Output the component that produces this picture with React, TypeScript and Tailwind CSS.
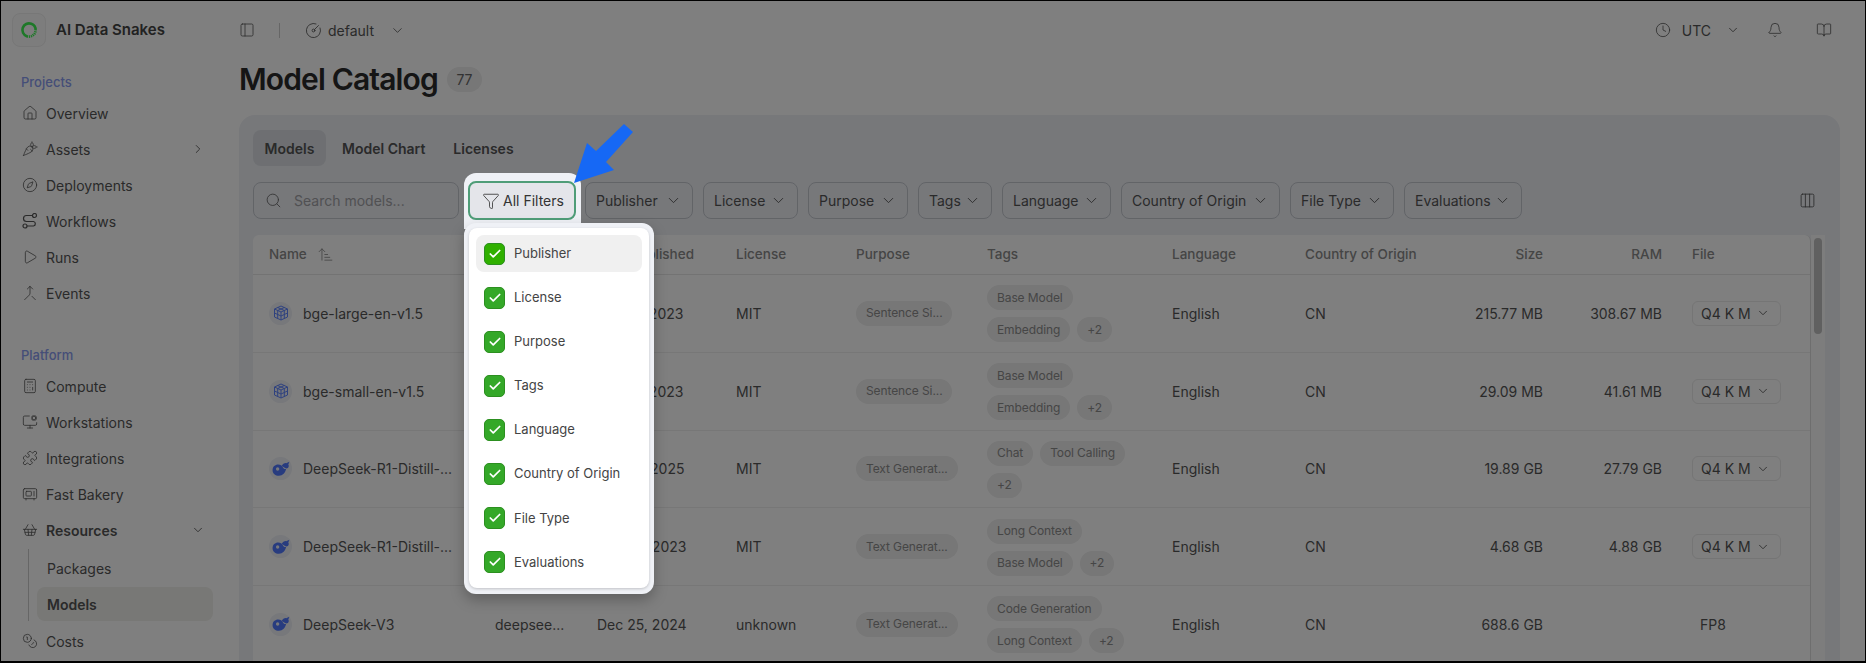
import {
  ArrowUpNarrowWide,
  Bell,
  BookOpen,
  Calculator,
  Carrot,
  Check,
  ChevronDown,
  ChevronRight,
  CircleGauge,
  Clock,
  Coins,
  Columns3,
  Compass,
  Funnel,
  House,
  Merge,
  Microwave,
  MonitorCog,
  PanelLeft,
  Play,
  Puzzle,
  Search,
  ShoppingBasket,
} from "lucide-react";
import type { ComponentType, ReactNode } from "react";

type IconType = ComponentType<{ size?: number; strokeWidth?: number; className?: string }>;

const gridCols =
  "grid grid-cols-[226px_102px_139px_120px_131px_185px_133px_125px_133px_119px_1fr] pl-[6px]";

function WorkflowIcon() {
  return (
    <svg width="16" height="16" viewBox="0 0 16 16" fill="none" stroke="currentColor" strokeWidth="1.2" className="shrink-0">
      <circle cx="12.500" cy="2.500" r="2" />
      <circle cx="3" cy="13" r="2" />
      <path d="M10.500 2.500H4.500a3 3 0 0 0 0 6h7a2.300 2.300 0 0 1 0 4.500H5" />
    </svg>
  );
}

function NavRow({ icon: Icon, label, bold, right }: { icon?: IconType; label: string; bold?: boolean; right?: ReactNode }) {
  return (
    <div className="flex h-9 items-center gap-2 pl-[21px] pr-[34px] text-[14px] text-[#555]">
      {Icon ? <Icon size={16} strokeWidth={1.2} className="shrink-0" /> : <WorkflowIcon />}
      <span className={bold ? "font-semibold" : ""}>{label}</span>
      {right && <span className="ml-auto">{right}</span>}
    </div>
  );
}

function Sidebar() {
  return (
    <aside className="flex w-[238px] shrink-0 flex-col">
      <div className="ml-[11px] mt-3 flex items-center gap-[10px]">
        <div className="flex h-[34px] w-[34px] items-center justify-center rounded-lg border border-[#eee] bg-[#fafafa]">
          <svg width="20" height="20" viewBox="0 0 20 20" fill="none">
            <circle cx="10" cy="10" r="6.600" stroke="#3cf050" strokeWidth="2.600" strokeDasharray="29 0.800 1.200 0.800 1.200 0.800 1.200 0.800 1.200 0.800 1.200 0.800" transform="rotate(110 10 10)" />
          </svg>
        </div>
        <span className="text-[15px] font-semibold text-[#444]">AI Data Snakes</span>
      </div>
      <div className="ml-5 mt-[25px] h-5 text-[13px] font-medium leading-5 text-[#8a9cf0]">Projects</div>
      <nav className="mt-[3px]">
        <NavRow icon={House} label="Overview" />
        <NavRow icon={Carrot} label="Assets" right={<ChevronRight size={14} strokeWidth={1.5} />} />
        <NavRow icon={Compass} label="Deployments" />
        <NavRow label="Workflows" />
        <NavRow icon={Play} label="Runs" />
        <NavRow icon={Merge} label="Events" />
      </nav>
      <div className="ml-5 mt-[34px] h-5 text-[13px] font-medium leading-5 text-[#8a9cf0]">Platform</div>
      <nav className="mt-[3px]">
        <NavRow icon={Calculator} label="Compute" />
        <NavRow icon={MonitorCog} label="Workstations" />
        <NavRow icon={Puzzle} label="Integrations" />
        <NavRow icon={Microwave} label="Fast Bakery" />
        <NavRow icon={ShoppingBasket} label="Resources" bold right={<ChevronDown size={14} strokeWidth={1.5} />} />
        <div className="ml-[27px] mt-[1px] border-l border-[#ccc] pl-[8px] text-[14px] text-[#555]">
          <div className="flex h-[38px] items-center pl-[10px]">Packages</div>
          <div className="flex h-[34px] w-[176px] items-center rounded-lg bg-[#f0f0ec] pl-[10px] font-semibold">Models</div>
        </div>
        <div className="mt-[2px]">
          <NavRow icon={Coins} label="Costs" />
        </div>
      </nav>
    </aside>
  );
}

function FilterButton({ label, className }: { label: string; className: string }) {
  return (
    <button className={`flex h-[37px] items-center justify-between rounded-lg border border-[#c4c8cf] pl-[10px] pr-[10px] text-[14px] text-[#555] ${className}`}>
      {label}
      <ChevronDown size={17} strokeWidth={1.3} />
    </button>
  );
}

function CheckRow({ label, active }: { label: string; active?: boolean }) {
  return (
    <div className={`flex h-[37px] items-center gap-2 rounded-lg pl-2 text-[13px] text-[#444] ${active ? "bg-[#f0f0f0]" : ""}`}>
      <span className={`flex h-[22px] w-[21px] items-center justify-center rounded-[5px] border border-[#2c8f20] ${active ? "bg-[#30b000]" : "bg-[#34a828]"}`}>
        <Check size={14} strokeWidth={3} className="text-white" />
      </span>
      <span className="ml-[1px]">{label}</span>
    </div>
  );
}

function AllFilters() {
  return (
    <div className="relative z-20 h-[37px] w-[106px] shrink-0">
      <div className="absolute -left-[5px] -top-[9px] h-[56px] w-[117px] rounded-t-xl bg-[#eff1f6]" />
      <button className="relative -left-px -top-px flex h-[39px] w-[108px] items-center gap-[3px] rounded-lg border-2 border-[#4f9d78] bg-[#e4e5ea] pl-3 text-[14px] text-[#333]">
        <Funnel size={18} strokeWidth={1.1} className="shrink-0" />
        All Filters
      </button>
      <div className="absolute -left-[5px] top-[41px] h-[371px] w-[190px] rounded-xl bg-[#eff1f6] p-[5px] shadow-[0_6px_14px_rgba(0,0,0,0.25)]">
        <div className="flex h-[360px] w-[180px] flex-col gap-[7.150px] rounded-lg bg-white px-[7px] py-[7px] shadow-[0_1px_3px_rgba(0,0,0,0.2)]">
          <CheckRow label="Publisher" active />
          <CheckRow label="License" />
          <CheckRow label="Purpose" />
          <CheckRow label="Tags" />
          <CheckRow label="Language" />
          <CheckRow label="Country of Origin" />
          <CheckRow label="File Type" />
          <CheckRow label="Evaluations" />
        </div>
      </div>
    </div>
  );
}

function CubeIcon() {
  return (
    <svg width="16" height="16" viewBox="0 0 16 16" fill="none" stroke="#5e84ff" strokeWidth="1">
      <path d="M8 1 14.500 4v8L8 15 1.500 12V4z" />
      <path d="M1.500 4 8 7l6.500-3M8 7v8" />
      <path d="M4.700 2.500 11.300 5.500M11.300 2.500 4.700 5.500M1.500 8 8 11l6.500-3M4.700 5.500v8M11.300 5.500v8" />
    </svg>
  );
}

function WhaleIcon() {
  return (
    <svg width="18" height="16" viewBox="0 0 16 14" fill="#5078ff">
      <path d="M.5 8C.5 5 2.700 3 5.500 3 7.500 3 9 4.200 9.800 5.600c.7 1.200 1.500 1.700 2.700 1.400-.5 3.300-3 6-6.300 6C3 13 .5 11 .5 8z" />
      <path d="M8.600 4.300C9.500 2.600 11 1.600 12.600 1.800L15.500.5l-1 2.500c.7 1.100.5 2.300-.4 3.100-1.200.8-2.600.4-3.500-.6z" />
      <circle cx="5" cy="7" r="1.500" fill="#eef0f6" />
    </svg>
  );
}

function Badge({ children }: { children: ReactNode }) {
  return (
    <span className="inline-flex h-[25px] items-center whitespace-nowrap rounded-full bg-[#eeeeee] px-[10px] text-[12px] tracking-[-0.1px] text-[#8c8c8c]">
      {children}
    </span>
  );
}

type Row = {
  kind: "cube" | "whale";
  name: string;
  publisher: string;
  published: string;
  license: string;
  purpose: string;
  tags: string[];
  size: string;
  ram: string;
  file: string;
};

// publisher stays empty where the open menu covers the cell
const rows: Row[] = [
  { kind: "cube", name: "bge-large-en-v1.5", publisher: "", published: "Sep 12, 2023", license: "MIT", purpose: "Sentence Si...", tags: ["Base Model", "Embedding", "+2"], size: "215.77 MB", ram: "308.67 MB", file: "Q4 K M" },
  { kind: "cube", name: "bge-small-en-v1.5", publisher: "", published: "Sep 12, 2023", license: "MIT", purpose: "Sentence Si...", tags: ["Base Model", "Embedding", "+2"], size: "29.09 MB", ram: "41.61 MB", file: "Q4 K M" },
  { kind: "whale", name: "DeepSeek-R1-Distill-...", publisher: "", published: "Jan 20, 2025", license: "MIT", purpose: "Text Generat...", tags: ["Chat", "Tool Calling", "+2"], size: "19.89 GB", ram: "27.79 GB", file: "Q4 K M" },
  { kind: "whale", name: "DeepSeek-R1-Distill-...", publisher: "", published: "Dec 25, 2023", license: "MIT", purpose: "Text Generat...", tags: ["Long Context", "Base Model", "+2"], size: "4.68 GB", ram: "4.88 GB", file: "Q4 K M" },
  { kind: "whale", name: "DeepSeek-V3", publisher: "deepsee...", published: "Dec 25, 2024", license: "unknown", purpose: "Text Generat...", tags: ["Code Generation", "Long Context", "+2"], size: "688.6 GB", ram: "", file: "FP8" },
];

function ModelRow({ row }: { row: Row }) {
  return (
    <div className={`${gridCols} h-[77.750px] shrink-0 items-center border-b border-[#eee] text-[14px] text-[#555]`}>
      <div className="flex items-center gap-[11px] px-[10px]">
        <span className="flex h-[23px] w-[23px] shrink-0 items-center justify-center rounded-full bg-[#eef0f6]">
          {row.kind === "cube" ? <CubeIcon /> : <WhaleIcon />}
        </span>
        <span className="whitespace-nowrap">{row.name}</span>
      </div>
      <div className="px-[10px]">{row.publisher}</div>
      <div className="px-[10px]">{row.published}</div>
      <div className="px-[10px]">{row.license}</div>
      <div className="px-[10px]">
        <Badge>{row.purpose}</Badge>
      </div>
      <div className="flex max-w-[160px] flex-wrap gap-[7px] px-[10px] pt-px">
        {row.tags.map((t) => (
          <Badge key={t}>{t}</Badge>
        ))}
      </div>
      <div className="px-[10px]">English</div>
      <div className="px-[10px]">CN</div>
      <div className="px-[10px] text-right">{row.size}</div>
      <div className="px-[10px] text-right">{row.ram}</div>
      <div className="pl-5">
        {row.file === "FP8" ? (
          <span className="pl-2">{row.file}</span>
        ) : (
          <span className="flex h-[25px] w-[89px] items-center justify-between rounded-md border border-[#eaeaea] pl-2 pr-[10px]">
            {row.file}
            <ChevronDown size={14} strokeWidth={1.5} />
          </span>
        )}
      </div>
    </div>
  );
}

function ModelTable() {
  return (
    <div className="flex min-h-0 flex-1">
      <div className="flex min-w-0 flex-1 flex-col overflow-hidden rounded-t-md border-r border-[#ddd] bg-white">
        <div className={`${gridCols} h-10 shrink-0 items-center whitespace-nowrap border-b border-[#e6e6e6] text-[13.500px] font-medium text-[#8a8a8a]`}>
          <div className="flex items-center gap-[10px] px-[10px]">
            Name
            <ArrowUpNarrowWide size={17} strokeWidth={1.2} />
          </div>
          <div className="px-[10px]" />
          <div className="px-[10px]">Date Published</div>
          <div className="px-[10px]">License</div>
          <div className="px-[10px]">Purpose</div>
          <div className="px-[10px]">Tags</div>
          <div className="px-[10px]">Language</div>
          <div className="px-[10px]">Country of Origin</div>
          <div className="px-[10px] text-right">Size</div>
          <div className="px-[10px] text-right">RAM</div>
          <div className="pl-5">File</div>
        </div>
        {rows.map((r, i) => (
          <ModelRow key={i} row={r} />
        ))}
      </div>
      <div className="w-[14px] shrink-0 bg-[#fbfbfb] pl-[3px] pt-[3px]">
        <div className="h-[96px] w-2 rounded-full bg-[#c0c0c0]" />
      </div>
    </div>
  );
}

function Main() {
  return (
    <main className="flex min-w-0 flex-1 flex-col pr-[25px]">
      <header className="flex h-[58px] shrink-0 items-center text-[#555]">
        <PanelLeft size={16} strokeWidth={1.2} />
        <span className="ml-[24px] h-[15px] w-px bg-[#ccc]" />
        <CircleGauge size={17} strokeWidth={1.2} className="ml-[25px]" />
        <span className="ml-[6px] text-[14px]">default</span>
        <ChevronDown size={15} strokeWidth={1.3} className="ml-4" />
        <div className="ml-auto flex items-center pr-[8px]">
          <Clock size={16} strokeWidth={1.2} />
          <span className="ml-[11px] text-[14px]">UTC</span>
          <ChevronDown size={14} strokeWidth={1.5} className="ml-[15px]" />
          <Bell size={16} strokeWidth={1.2} className="ml-[27px]" />
          <BookOpen size={16} strokeWidth={1.2} className="ml-[33px]" />
        </div>
      </header>
      <div className="mt-[2px] flex h-9 shrink-0 items-center">
        <h1 className="text-[30px] font-semibold tracking-[-0.850px] text-[#2a2a2a]">Model Catalog</h1>
        <span className="ml-[9px] flex h-[25px] w-[35px] items-center justify-center rounded-full bg-[#eeeeee] text-[14px] text-[#666]">77</span>
      </div>
      <section className="mt-[18px] flex min-h-0 flex-1 flex-col overflow-hidden rounded-t-2xl bg-[#eef0f5] pb-0 pl-[14px] pr-[15px] pt-[15px]">
        <div className="flex h-9 shrink-0 items-center text-[14px] font-semibold text-[#555]">
          <span className="flex h-9 w-[73px] items-center justify-center rounded-lg bg-[#dcdfe4]">Models</span>
          <span className="ml-4">Model Chart</span>
          <span className="ml-[28px]">Licenses</span>
        </div>
        <div className="mt-4 flex h-[37px] shrink-0 items-center gap-[10px]">
          <div className="flex h-[37px] w-[206px] shrink-0 items-center gap-3 rounded-lg border border-[#c4c8cf] pl-[11px] text-[14px] text-[#a2a2a6]">
            <Search size={17} strokeWidth={1.2} className="text-[#666]" />
            Search models...
          </div>
          <AllFilters />
          <FilterButton label="Publisher" className="w-[108px]" />
          <FilterButton label="License" className="w-[95px]" />
          <FilterButton label="Purpose" className="w-[100px]" />
          <FilterButton label="Tags" className="w-[74px]" />
          <FilterButton label="Language" className="w-[109px]" />
          <FilterButton label="Country of Origin" className="w-[159px]" />
          <FilterButton label="File Type" className="w-[104px]" />
          <FilterButton label="Evaluations" className="w-[118px]" />
          <Columns3 size={17} strokeWidth={1.2} className="ml-[267px] text-[#555]" />
        </div>
        <div className="mt-4 flex min-h-0 flex-1">
          <ModelTable />
        </div>
      </section>
    </main>
  );
}

export default function App() {
  return (
    <div className="relative flex h-[663px] w-[1866px] overflow-hidden border border-b-2 border-black bg-white font-['Inter',sans-serif]">
      <Sidebar />
      <Main />
      <div className="absolute inset-0 z-10 bg-black/50" />
      <svg className="absolute left-[560px] top-[110px] z-30" width="80" height="80" viewBox="0 0 80 80" fill="#1668f5">
        <path d="M13 72 26 32 35 40 63 13 72 21 45 51 53 59z" />
      </svg>
    </div>
  );
}
